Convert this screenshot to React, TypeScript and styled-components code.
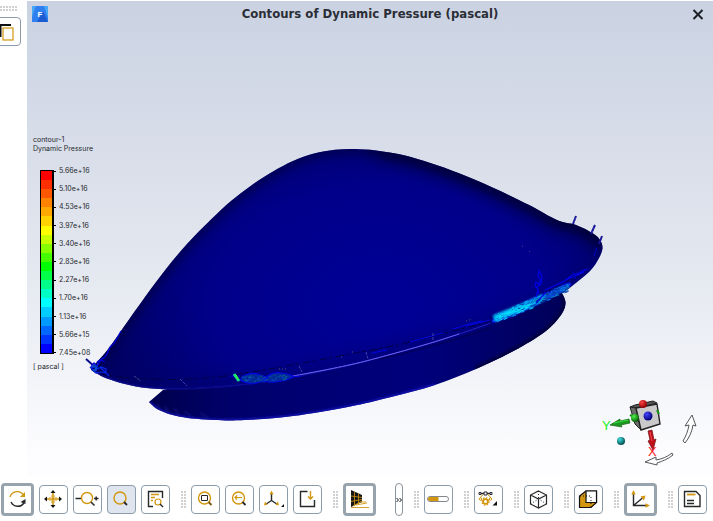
import React from "react";
import styled, { createGlobalStyle } from "styled-components";

const GlobalStyle = createGlobalStyle`
  * { box-sizing: border-box; }
  body { margin: 0; background: #fff; font-family: "Liberation Sans", Arial, sans-serif; }
`;

const GOLD = "#d2960f";
const INK = "#26282b";

const Page = styled.div`
  display: flex;
  flex-direction: column;
  min-height: 100vh;
  padding-top: 1px;
  overflow: hidden;
`;

const Workspace = styled.div`
  display: flex;
  align-items: stretch;
`;

const Sidebar = styled.aside`
  width: 27px;
  flex: none;
  overflow: hidden;
  padding-top: 5px;
  display: flex;
  flex-direction: column;
  align-items: flex-start;
  gap: 6px;
`;

const SideGrip = styled.div`
  width: 17px;
  height: 5px;
  flex: none;
  background: radial-gradient(circle at 1px 1px, #c0c0c0 0 0.6px, transparent 1px) 0 0 / 3px 3px;
`;

const Viewport = styled.main`
  flex: 1;
  min-width: 0;
  display: grid;
  background: linear-gradient(#cad2e2, #e3e7ef 55%, #fdfdff 96%);
  & > * { grid-area: 1 / 1; }
`;

const Scene = styled.svg`
  display: block;
  width: 100%;
  height: auto;
`;

const Overlay = styled.div`
  z-index: 1;
  display: flex;
  flex-direction: column;
  align-items: stretch;
`;

const TitleBar = styled.header`
  display: flex;
  align-items: center;
  justify-content: space-between;
  height: 28px;
  padding: 0 9px 2px 5px;
`;

const Title = styled.h1`
  margin: 0;
  font: bold 13px/18px "DejaVu Sans Condensed", "DejaVu Sans", sans-serif;
  color: #2b2e36;
`;

const CloseButton = styled.button`
  width: 12px;
  height: 12px;
  padding: 0;
  border: 0;
  background: none;
  display: flex;
`;

const Legend = styled.section`
  margin: 106px 0 0 6px;
  color: #26282c;
  font-family: Inter, "Liberation Sans", sans-serif;
  font-size: 7px;
  line-height: 9px;
  align-self: flex-start;
`;

const LegendName = styled.div`
  white-space: nowrap;
`;

const Scale = styled.div`
  display: flex;
  margin: 13px 0 4px 7px;
`;

const ColorBar = styled.div`
  display: flex;
  flex-direction: column;
  width: 14px;
  height: 184px;
  margin: 4px 0;
  border: 1px solid #000;
  border-width: 1px 2px 1px 1px;
`;

const Band = styled.span<{ $color: string }>`
  flex: 1;
  background: ${(p) => p.$color};
`;

const Values = styled.ol`
  list-style: none;
  margin: 0;
  padding: 0;
  height: 192px;
  display: flex;
  flex-direction: column;
  justify-content: space-between;
  line-height: 10px;
`;

const Value = styled.li`
  display: flex;
  align-items: center;
  gap: 3px;
  &::before {
    content: "";
    width: 2px;
    height: 1px;
    background: #000;
  }
`;

const Toolbar = styled.nav`
  display: flex;
  align-items: center;
  gap: 5px;
  padding: 6px 1px 5px;
`;

const ToolButton = styled.button<{ $active?: boolean; $filled?: boolean }>`
  flex: none;
  display: flex;
  width: ${(p) => (p.$active ? 33 : 29)}px;
  height: ${(p) => (p.$active ? 33 : 29)}px;
  padding: 0;
  border: ${(p) => (p.$active ? 3 : 1)}px solid ${(p) => (p.$active ? "#97a3ad" : "#8c9cab")};
  border-radius: 4px;
  background: ${(p) => (p.$filled ? "#dfe5ee" : "#fff")};
`;

const SideButton = styled(ToolButton)`
  margin-left: -8px;
`;

const Grip = styled.span`
  flex: none;
  width: 11px;
  height: 17px;
  background: radial-gradient(circle at 1px 1px, #c0c0c0 0 0.6px, transparent 1px) 0 0 / 3px 3px;
  background-origin: content-box;
  background-clip: content-box;
  padding-left: 6px;
`;

const Expander = styled.button`
  flex: none;
  width: 8px;
  height: 33px;
  margin-left: 14px;
  padding: 0;
  border: 1px solid #8b939b;
  border-radius: 4px;
  background: #fff;
  display: flex;
  align-items: center;
  justify-content: center;
`;

const Glyph = styled.svg`
  display: block;
  flex: none;
  margin: auto;
`;

function Icon({ children }: { children: React.ReactNode }) {
  return (
    <Glyph width="27" height="27" viewBox="1 1 27 27" fill="none" stroke={INK} strokeWidth="1.4" aria-hidden="true">
      {children}
    </Glyph>
  );
}

type Point = [number, number];

/* Smooth cubic path through a list of points (Catmull-Rom). */
function smooth(points: Point[], closed = false): string {
  const n = points.length;
  const at = (i: number): Point =>
    closed ? points[(i + n) % n] : points[Math.max(0, Math.min(n - 1, i))];
  let d = `M${points[0][0]} ${points[0][1]}`;
  for (let i = 0; i < (closed ? n : n - 1); i++) {
    const [a, b, c, e] = [at(i - 1), at(i), at(i + 1), at(i + 2)];
    d += `C${b[0] + (c[0] - a[0]) / 6} ${b[1] + (c[1] - a[1]) / 6} ${c[0] - (e[0] - b[0]) / 6} ${c[1] - (e[1] - b[1]) / 6} ${c[0]} ${c[1]}`;
  }
  return closed ? d + "Z" : d;
}

const TOP_EDGE: Point[] = [
  [91, 369], [97, 362], [105, 353], [114, 341], [121, 331], [145, 297], [166, 269], [187, 244], [211, 219.5],
  [231, 201], [252, 185], [273, 171.5], [293, 161], [314, 153.5], [335, 149.7], [355, 149], [376, 150.5],
  [404, 155.3], [431, 163.3], [459, 173.3], [493, 187.7], [528, 204.5], [558, 220.5], [576, 225], [593, 233.5],
  [600, 240], [602.5, 248],
];
const RIM: Point[] = [
  [602.5, 248], [599, 258], [590, 271], [572, 286], [562, 293], [538, 305], [507, 318], [491, 325], [459, 336],
  [424, 346], [366, 362], [293, 378], [245, 385], [218, 387.7], [183, 389.5], [149, 388.3], [125, 384],
  [107, 378.5], [97, 373.5], [91, 369],
];
const LOWER: Point[] = [
  [149, 402], [159, 410], [180, 416.7], [214, 420], [245, 420], [293, 416], [349, 406.7], [390, 397.3],
  [435, 385], [476, 369], [514, 350.7], [545, 331.7], [561, 315], [565.5, 303], [562, 293],
];
const SEAM: Point[] = [[250, 382], [293, 376], [330, 369], [366, 361], [424, 345], [459, 334], [491, 323]];

const dome = smooth([...TOP_EDGE, ...RIM.slice(1, -1)], true);
const lower = smooth(LOWER) + "L530 285L300 360L163 390Z";

const HOT: Point[] = [[492, 322], [500, 314], [514, 308], [531, 299], [550, 292], [565, 284], [571, 284], [564, 291], [548, 299], [530, 308], [510, 317]];

/* Repeatable speckle for the turbulent patches along the rim. */
function speckle(from: Point, to: Point, spread: number, count: number, colors: string[]) {
  let seed = 7;
  const next = () => (seed = (seed * 16807) % 2147483647) / 2147483647;
  return Array.from({ length: count }, (_, i) => {
    const t = next();
    const x = from[0] + (to[0] - from[0]) * t + (next() - 0.5) * 3;
    const y = from[1] + (to[1] - from[1]) * t + (next() - 0.5) * spread;
    return (
      <path key={i} d={`M${x.toFixed(1)} ${y.toFixed(1)}l${(1 + next() * 3).toFixed(1)} ${(-next() * 2).toFixed(1)}`}
        stroke={colors[Math.floor(next() * colors.length)]} strokeWidth="1" />
    );
  });
}

function Model() {
  return (
    <g fill="none">
      <path d={lower} fill="url(#under)" />
      <g clipPath="url(#lowerClip)">
        <path d={smooth(LOWER.slice(0, 9))} stroke="#1414b4" strokeWidth="3" filter="url(#soft)" />
        <path d="M157 404l4 7M165 406l4 8M174 408l5 7M184 411l7 5M200 413l9 5" stroke="#2a2aa8" strokeWidth="2" opacity=".4" filter="url(#soft)" />
        <path d={smooth(LOWER.slice(9))} stroke="#000040" strokeWidth="6" filter="url(#soft)" />
      </g>
      <path d={dome} fill="url(#hull)" />
      <g clipPath="url(#domeClip)">
        <path d={smooth(TOP_EDGE)} stroke="#000040" strokeWidth="9" filter="url(#mid)" opacity=".75" />
        <path d={smooth(TOP_EDGE.slice(16))} stroke="#000024" strokeWidth="10" filter="url(#wide)" />
        <path d={smooth(RIM)} stroke="#00006c" strokeWidth="18" filter="url(#wide)" opacity=".6" />
        <path d={smooth(RIM.slice(10))} stroke="#1212a0" strokeWidth="2" filter="url(#soft)" />
      </g>
      <path d="M100 374C150 382 200 381 245 373C290 366 330 358 360 352C400 346 440 334 492 321" stroke="#000047" strokeWidth="1" strokeDasharray="8 2 3 4" />
      <path d={smooth(SEAM)} stroke="#2824bc" strokeWidth="1" />
      <path d={smooth(SEAM.slice(1, 6))} stroke="#6b60ed" strokeWidth="1" />
      <path d="M380 359C420 350 455 340 490 328" stroke="#00004e" />
      <path d="M372 353l15-3M410 342l14-4 19-5M453 329l16-5 13-3M466 326l24-6M276 378l25-2" stroke="#0404e6" strokeWidth="1" />
      <path d="M134 376l7 5M180 379l7 7M299 366l3 6M366 352l2 7M433 333v8" stroke="#4444a8" strokeWidth="1" strokeDasharray="3 1" />
      <path d="M522 246l2 1M529 251l1 1M341 357h2M352 352h3M466 321l6-2M279 369h8" stroke="#555573" strokeWidth="1" strokeDasharray="1 2" />

      <path d="M86 359l9 8" stroke="#0a0a8c" strokeWidth="2" />
      <path d="M90 368l4-5 3 3 4-6 4 2M107 354l3-7 5-5 6-11M97 362l8-5 3-5" stroke="#0000e0" strokeWidth="1.2" />
      <path d="M91 368l5 5 5-1 5 1v-4l-5-2-4 2-4-2zM98 363l-2 8M100 367l5 5M104 371l5 5" stroke="#0526e4" strokeWidth="1.2" />
      <path d="M92 366h4v4h-3" stroke="#0878d8" strokeWidth="1" />

      <path d="M230 376h10M240 380c4-7 14-8 20-5l8 3-8 4-8 2-8-2zM263 381c5-8 14-9 19-8 7 1 12 3 11 4-5 3-18 6-24 5z" stroke="#0006e0" fill="#03289a" strokeWidth="1.2" />
      {speckle([242, 380], [287, 377], 6, 45, ["#075e9e", "#0862a0", "#0540c3", "#064386"])}
      <path d="M234 374l5 7" stroke="#13e584" strokeWidth="3" />
      <path d="M236 375l2 4" stroke="#42ff17" strokeWidth="1" />

      <path d={smooth(HOT, true)} fill="#0547df" stroke="#0010e8" />
      <path d="M494 319C510 311 525 307 544 297" stroke="#06aee9" strokeWidth="7" filter="url(#soft)" />
      <path d="M496 319C508 312 519 311 533 304" stroke="#03e9ff" strokeWidth="3" filter="url(#soft)" />
      {speckle([495, 319], [533, 303], 9, 70, ["#037ae2", "#0aa0ee", "#03c3ff", "#10e4ff", "#063dac"])}
      {speckle([530, 304], [568, 287], 8, 90, ["#037ae2", "#063dac", "#0655a8", "#0f80c2", "#052783"])}
      <path d="M536 297l2-8-3-3 1-4 3 2 2-5-3-2 1-6 3 5-1 8-4 3 2 7M545 290l18-8 9-7 8-2 7-4M550 288l18-9 16-7M536 303l10-11" stroke="#0000e2" strokeWidth="1.2" />
      <path d="M491 314v11M488 325h5" stroke="#000070" />
      <path d="M573 272l3 7M574 275l9-5 6-1M594 256l3-8" stroke="#0000c8" strokeWidth="1" />
      <path d="M573 224l3-8M591 234l4-9M599 244l3-8" stroke="#151596" strokeWidth="2" />
      <path d="M574 222l2-5M592 232l2-5" stroke="#5050c8" strokeWidth="1" strokeDasharray="1 2" />
    </g>
  );
}

function Triad() {
  return (
    <g fontFamily="Liberation Sans, sans-serif">
      <path d="M630 407l5-2 18-4 4 2-20 5z" fill="#555" stroke="#222" />
      <path d="M630 407l6 1 5 22-6-6z" fill="#6b6d6b" stroke="#222" />
      <path d="M636 408l21-4 3 20-19 6z" fill="#c9c9c9" stroke="#222" strokeWidth="1.4" />
      <path d="M657 410l2 4M630 415l2 1" stroke="#168c16" strokeWidth="2" />
      <circle cx="643" cy="404" r="4" fill="url(#red)" />
      <circle cx="635" cy="418" r="4" fill="url(#green)" />
      <circle cx="648" cy="416" r="4.5" fill="url(#blue)" />
      <circle cx="621" cy="441" r="4" fill="url(#teal)" />
      <path d="M610 425l10-6v2l9-2 1 4-9 2 1 2z" fill="#1d9822" stroke="#126414" strokeWidth=".7" />
      <path d="M614 423l14-3" stroke="#37e33a" />
      <path d="M648 431l4-1 2 10 2-1-3 11-5-9 2-1z" fill="#bf101a" stroke="#720910" strokeWidth=".7" />
      <path d="M650 432l2 9" stroke="#ef4950" />
      <text x="602" y="430" fill="#18f018" fontSize="13">Y</text>
      <text x="648" y="456" fill="#ff1717" fontSize="13">X</text>
      <g fill="#fff" stroke="#55585b" strokeWidth="1">
        <path d="M692 415l4 11-3-1c-1 7-4 13-8 18l-2-2c3-5 5-10 6-16l-4 1z" />
        <path d="M645 462l11-5v3c6-1 11-3 16-7l1 2c-5 4-10 6-16 8v2z" />
      </g>
    </g>
  );
}

const BANDS = [
  "#ff0000", "#ff2e00", "#ff5700", "#ff8300", "#ffa800", "#ffd200", "#ffff00", "#c8ff00", "#88ff00", "#44ff00",
  "#00ff00", "#00ff48", "#00ff88", "#00ffc4", "#00ffff", "#00ccff", "#009aff", "#0068ff", "#0034ff", "#0000ff",
];
const VALUES = [
  "5.66e+16", "5.10e+16", "4.53e+16", "3.97e+16", "3.40e+16", "2.83e+16", "2.27e+16", "1.70e+16", "1.13e+16",
  "5.66e+15", "7.45e+08",
];

const sphere = (id: string, light: string, dark: string) => (
  <radialGradient id={id} cx=".35" cy=".3" r=".7">
    <stop offset="0" stopColor={light} />
    <stop offset="1" stopColor={dark} />
  </radialGradient>
);

export default function App() {
  return (
    <Page>
      <GlobalStyle />
      <Workspace>
        <Sidebar>
          <SideGrip />
          <SideButton aria-label="Copy view">
            <Icon>
              <path d="M8.500 20V8H19" strokeWidth="2" stroke="#111" />
              <rect x="11" y="11" width="10" height="12" stroke={GOLD} fill="#fff" strokeWidth="1.2" />
            </Icon>
          </SideButton>
        </Sidebar>
        <Viewport>
          <Scene viewBox="27 1 686 476" role="img" aria-label="Contours of dynamic pressure">
            <defs>
              <radialGradient id="hull" gradientUnits="userSpaceOnUse" cx="380" cy="305" r="280" gradientTransform="translate(0 90) scale(1 .7)">
                <stop offset="0" stopColor="#000096" />
                <stop offset=".6" stopColor="#00008a" />
                <stop offset="1" stopColor="#000062" />
              </radialGradient>
              <linearGradient id="under" x1="0" y1="0" x2="1" y2="0">
                <stop offset="0" stopColor="#00004c" />
                <stop offset=".2" stopColor="#00006c" />
                <stop offset=".65" stopColor="#00007c" />
                <stop offset="1" stopColor="#000058" />
              </linearGradient>
              {sphere("red", "#f44", "#8c0000")}
              {sphere("green", "#4bf54b", "#086008")}
              {sphere("blue", "#4444ff", "#000078")}
              {sphere("teal", "#3fdede", "#044f50")}
              <filter id="soft" x="-20%" y="-30%" width="140%" height="160%"><feGaussianBlur stdDeviation="1.2" /></filter>
              <filter id="mid" x="-20%" y="-30%" width="140%" height="160%"><feGaussianBlur stdDeviation="5" /></filter>
              <filter id="wide" x="-20%" y="-30%" width="140%" height="160%"><feGaussianBlur stdDeviation="8" /></filter>
              <clipPath id="domeClip"><path d={dome} /></clipPath>
              <clipPath id="lowerClip"><path d={lower} /></clipPath>
            </defs>
            <Model />
            <Triad />
          </Scene>
          <Overlay>
            <TitleBar>
              <svg width="16" height="16" viewBox="0 0 16 16" role="img" aria-label="Fluent">
                <path d="M0 0h16v16H0z" fill="#2f7ff0" />
                <path d="M0 0h4L0 11zM12 0h4v12z" fill="#47a6f5" />
                <path d="M11 5l5 11H5z" fill="#1c5bd0" />
                <text x="5.500" y="11" fontFamily="Liberation Sans, sans-serif" fontWeight="bold" fontSize="8" fill="#fff">F</text>
              </svg>
              <Title>Contours of Dynamic Pressure (pascal)</Title>
              <CloseButton aria-label="Close">
                <svg width="12" height="12" viewBox="0 0 12 12"><path d="M1.500 2l9 9M10.500 2l-9 9" stroke="#1c1f24" strokeWidth="2" /></svg>
              </CloseButton>
            </TitleBar>
            <Legend>
              <LegendName>contour-1</LegendName>
              <LegendName>Dynamic Pressure</LegendName>
              <Scale>
                <ColorBar>{BANDS.map((c) => <Band key={c} $color={c} />)}</ColorBar>
                <Values>{VALUES.map((v) => <Value key={v}>{v}</Value>)}</Values>
              </Scale>
              <LegendName>[ pascal ]</LegendName>
            </Legend>
          </Overlay>
        </Viewport>
      </Workspace>

      <Toolbar aria-label="View tools">
        <ToolButton $active aria-label="Rotate">
          <Icon>
            <path d="M7 12a7.500 7.500 0 0 1 14-1" stroke={GOLD} />
            <path d="M22 7v5h-5z" fill={GOLD} stroke="none" />
            <path d="M8 17a7.500 7.500 0 0 0 13 1" />
            <path d="M22.500 19v-5l-5 3z" fill={INK} stroke="none" />
          </Icon>
        </ToolButton>
        <ToolButton aria-label="Pan">
          <Icon>
            <path d="M14 8v12M8 14h12" stroke={GOLD} strokeWidth="1.600" />
            <path d="M12.500 10v2.500H10M15.500 10v2.500H18M12.500 18v-2.500H10M15.500 18v-2.500H18" stroke={GOLD} strokeWidth=".5" />
            <path d="M14 5l2.500 3h-5zM14 23l2.500-3h-5zM5 14l3-2.500v5zM23 14l-3-2.500v5z" fill="#111" stroke="none" />
          </Icon>
        </ToolButton>
        <ToolButton aria-label="Zoom in or out">
          <Icon>
            <circle cx="14" cy="13" r="5.500" stroke={GOLD} />
            <path d="M2.500 13.500H8M18 17l3.500 3.500M21 13.500h4.500M23.200 11.500v4" strokeWidth="1.500" />
          </Icon>
        </ToolButton>
        <ToolButton $filled aria-label="Zoom to area">
          <Icon>
            <circle cx="13" cy="13" r="6" stroke={GOLD} />
            <path d="M17 17l3 3" strokeWidth="1.800" />
          </Icon>
        </ToolButton>
        <ToolButton aria-label="Probe">
          <Icon>
            <path d="M12 21.500H7.500V6.500h14V13" />
            <path d="M10 9.500h8M10 12.500h4M10 15.500h2" stroke={GOLD} />
            <circle cx="17" cy="17" r="3" stroke={GOLD} strokeWidth="1.200" />
            <path d="M19 19l3 3" />
          </Icon>
        </ToolButton>
        <Grip />
        <ToolButton aria-label="Fit to window">
          <Icon>
            <circle cx="13.500" cy="13" r="6" stroke={GOLD} />
            <path d="M10.500 10.500h6v5h-6z" strokeWidth="1" />
            <path d="M17.500 17l3 3" stroke="#795611" strokeWidth="1.800" />
          </Icon>
        </ToolButton>
        <ToolButton aria-label="Previous view">
          <Icon>
            <circle cx="13.500" cy="13" r="6" stroke={GOLD} />
            <path d="M10 12.500h7M12 10.500l-2 2 2 2" stroke={GOLD} strokeWidth="1.200" />
            <path d="M17.500 17l3 3" strokeWidth="1.800" />
          </Icon>
        </ToolButton>
        <ToolButton aria-label="Set view">
          <Icon>
            <path d="M12.500 8v7.500L6.500 19.500M12.500 15.500l6 4" />
            <path d="M12.500 5.500l2 4h-4zM5 20.500l1-4 2.500 3zM20 20.500l-1-4-2.500 3z" fill={GOLD} stroke="none" />
            <path d="M25 19v3h-3z" fill="#111" stroke="none" />
          </Icon>
        </ToolButton>
        <ToolButton aria-label="Import view">
          <Icon>
            <path d="M14.500 6.500h-7v15h14V15" />
            <path d="M17.500 6v7M15 11.500l2.500 2.500 2.500-2.500" stroke={GOLD} />
          </Icon>
        </ToolButton>
        <Grip />
        <ToolButton $active aria-label="Perspective projection">
          <Icon>
            <path d="M6 5l11 5v7L6 22z" fill="#171717" stroke="none" />
            <path d="M6 11l11 1.500M6 16.500l11-2M9.500 6.500v14M13.500 8.500v10" stroke={GOLD} strokeWidth=".8" />
            <path d="M6 22.500h18M11 20l11-2M16 17h5M8 21l9-5" stroke={GOLD} strokeWidth=".9" />
          </Icon>
        </ToolButton>
        <Expander aria-label="More tools">
          <svg width="6" height="6" viewBox="0 0 6 6" fill="none" stroke="#111" strokeWidth="1"><path d="M.5 1l2 2-2 2M3.500 1l2 2-2 2" /></svg>
        </Expander>
        <Grip />
        <ToolButton aria-label="Transparency">
          <Icon>
            <rect x="3.500" y="11.500" width="21" height="5" rx="2.500" fill="#fff" stroke="#85888b" strokeWidth="1" />
            <path d="M14.500 12H6a2 2 0 0 0 0 4h8.500z" fill={GOLD} stroke="none" />
          </Icon>
        </ToolButton>
        <Grip />
        <ToolButton aria-label="Display options">
          <Icon>
            <path d="M5 8.500h13" />
            <path d="M10 7h3v3h-3zM5 7.500h2v2H5zM16 7.500h2v2h-2z" fill="#fff" strokeWidth="1" />
            <path d="M9 10q-2.500 1-2.500 3M14 10q2.500 1 2.500 3" stroke={GOLD} strokeWidth="1" />
            <circle cx="6.500" cy="14" r="1.200" stroke={GOLD} strokeWidth="1" />
            <circle cx="16.500" cy="14" r="1.200" stroke={GOLD} strokeWidth="1" />
            <circle cx="11.500" cy="16.500" r="2.400" stroke={GOLD} strokeWidth="1.800" />
            <circle cx="11.500" cy="16.500" r="3.700" stroke={GOLD} strokeWidth="1.200" strokeDasharray="1.450 1.450" />
            <path d="M23 16v4.500h-4.500z" fill="#111" stroke="none" />
          </Icon>
        </ToolButton>
        <Grip />
        <ToolButton aria-label="Isometric view">
          <Icon>
            <path d="M14.500 6l8 4v9l-8 4-8-4v-9zM6.500 10l8 4 8-4M14.500 14v9" strokeWidth="1.200" />
            <path d="M14.500 6v8M6.500 19l8-5 8 5" strokeWidth="1" strokeDasharray="1 2" />
          </Icon>
        </ToolButton>
        <Grip />
        <ToolButton aria-label="Bounding box">
          <Icon>
            <path d="M12 6l-6.500 5v11.500H17l5.500-5V6z" fill={GOLD} stroke="#111" strokeWidth="1.200" />
            <path d="M12 6h10.500v11.500H12z" fill="#fff" stroke="#111" strokeWidth="1.200" />
            <path d="M6 11h11v11" stroke="#111" strokeWidth="1" strokeDasharray="1 2" />
          </Icon>
        </ToolButton>
        <Grip />
        <ToolButton $active aria-label="Show axes">
          <Icon>
            <path d="M7.500 8v12.500H21M7.500 20.500l9-7.500" />
            <path d="M7.500 5l2.200 4.500H5.300zM24 20.500l-4.500 2.300v-4.600zM19.500 10.500l-1.500 5-3.500-4z" fill={GOLD} stroke="none" />
          </Icon>
        </ToolButton>
        <Grip />
        <ToolButton aria-label="Annotations">
          <Icon>
            <path d="M6.500 6.500H18l4 4v11H6.500z" />
            <path d="M9 9.500h8.500" stroke={GOLD} strokeWidth="1.800" />
            <path d="M9 15.500h7M9 18.500h7" />
          </Icon>
        </ToolButton>
      </Toolbar>
    </Page>
  );
}
